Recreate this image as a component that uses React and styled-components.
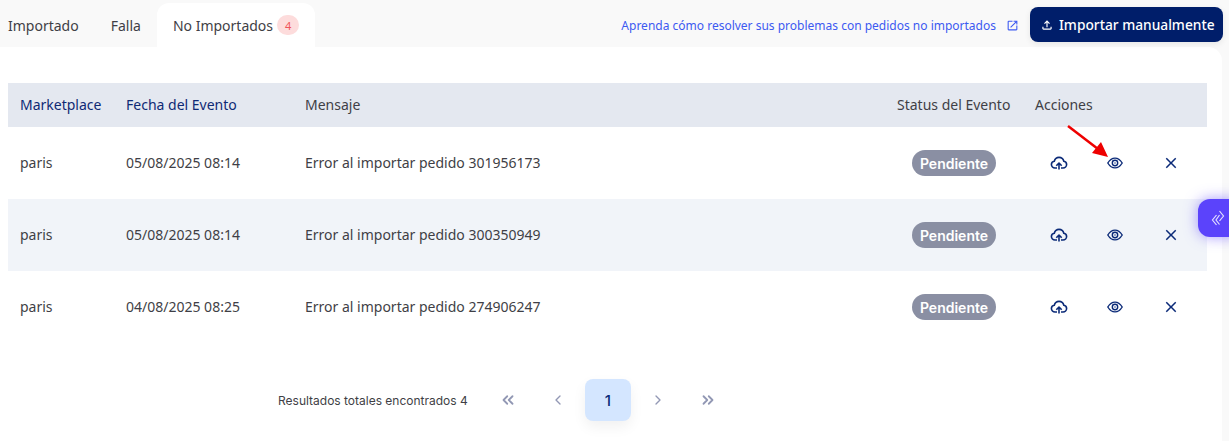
import React from 'react';
import styled, { createGlobalStyle } from 'styled-components';
import { MdClose, MdOpenInNew, MdOutlineFileUpload } from 'react-icons/md';
import { ChevronLeft, ChevronRight, ChevronsLeft, ChevronsRight } from 'lucide-react';

const rows = [
  { market: 'paris', date: '05/08/2025 08:14', order: '301956173' },
  { market: 'paris', date: '05/08/2025 08:14', order: '300350949' },
  { market: 'paris', date: '04/08/2025 08:25', order: '274906247' },
];

const GlobalStyle = createGlobalStyle`
  html, body { margin: 0; padding: 0; background: #f9f9f9; height: 441px; overflow: hidden; }
  body { font-family: "Noto Sans", "Open Sans", sans-serif; }
`;

const Page = styled.div`
  position: relative;
  width: 1229px;
  height: 441px;
  overflow: hidden;
`;

const TopBar = styled.div`
  display: flex;
  align-items: flex-start;
  justify-content: space-between;
  height: 47px;
  padding: 0 6px 0 8px;
  box-sizing: border-box;
`;

const Tabs = styled.div`
  display: flex;
  align-items: flex-start;
  padding-top: 3px;
`;

const Tab = styled.div`
  display: flex;
  align-items: center;
  height: 44px;
  box-sizing: border-box;
  padding: 0 16px;
  background: ${p => (p.$active ? '#fff' : 'transparent')};
  border-radius: 12px 12px 0 0;
  color: #3f3f46;
  font-size: 14px;
  &:first-child { padding-left: 0; }
`;

const Count = styled.span`
  display: inline-flex;
  align-items: center;
  justify-content: center;
  width: 22px;
  height: 20px;
  margin-left: 4px;
  border-radius: 10px;
  background: #fddcdc;
  color: #f0555a;
  font-size: 11px;
`;

const Help = styled.div`
  display: flex;
  align-items: center;
  height: 44px;
  margin-top: 3px;
`;

const HelpLink = styled.a`
  display: flex;
  align-items: center;
  gap: 10px;
  color: #3d5af1;
  font-size: 12px;
  svg { width: 13px; height: 13px; }
`;

const ImportButton = styled.button`
  display: flex;
  align-items: center;
  gap: 5px;
  width: 193px;
  height: 35px;
  margin: -1px 0 0 11px;
  padding: 0 0 0 10px;
  border: 0;
  border-radius: 8px;
  background: #001e6a;
  color: #fff;
  font-family: inherit;
  font-size: 13.75px;
  font-weight: 500;
  white-space: nowrap;
  box-shadow: 0 2px 6px rgba(0, 0, 0, 0.08);
  svg { width: 14px; height: 14px; }
`;

const Panel = styled.div`
  width: 1222px;
  height: 394px;
  padding: 36px 15px 0 8px;
  box-sizing: border-box;
  background: #fff;
  border-radius: 0 14px 0 0;
`;

const Row = styled.div`
  display: grid;
  grid-template-columns: 106px 179px 592px 138px 184px;
  align-items: center;
  height: ${p => (p.$head ? 44 : 72)}px;
  background: ${p => (p.$head ? '#e4e8f0' : p.$shaded ? '#f1f4f9' : '#fff')};
  color: #3f3f46;
  font-size: 14px;
`;

const Cell = styled.div`
  padding: 0 0 2px 12px;
  color: ${p => (p.$accent ? '#0f2a75' : 'inherit')};
  white-space: nowrap;
`;

const StatusCell = styled.div`
  display: flex;
  justify-content: center;
`;

const Pill = styled.span`
  display: inline-flex;
  align-items: center;
  height: 26px;
  padding: 0 8px;
  border-radius: 13px;
  background: #8a8fa3;
  color: #fff;
  font-family: Inter, sans-serif;
  font-size: 14px;
  font-weight: 600;
`;

const Actions = styled.div`
  display: flex;
  padding-left: 8px;
`;

const ActionIcon = styled.span`
  display: flex;
  justify-content: center;
  width: 56px;
  color: #0b2a78;
  svg { width: 18px; height: 18px; }
`;

const Pager = styled.div`
  display: flex;
  align-items: center;
  height: 42px;
  margin: 36px 0 0 270px;
`;

const Total = styled.span`
  margin-right: 15px;
  color: #3f3f46;
  font-family: Inter, sans-serif;
  font-size: 12px;
`;

const PageCell = styled.span`
  display: flex;
  align-items: center;
  justify-content: center;
  width: 46px;
  height: 42px;
  margin: 0 2px;
  border-radius: 8px;
  color: ${p => (p.$current ? '#0b2a78' : '#9298b4')};
  background: ${p => (p.$current ? '#d4e6ff' : 'transparent')};
  box-shadow: ${p => (p.$current ? '0 6px 14px rgba(0, 0, 0, 0.06)' : 'none')};
  font-family: Inter, sans-serif;
  font-size: 15px;
  font-weight: 500;
`;

const FloatTab = styled.div`
  position: absolute;
  left: 1198px;
  top: 199px;
  display: flex;
  align-items: center;
  justify-content: center;
  width: 40px;
  height: 38px;
  box-sizing: border-box;
  border-radius: 12px 0 0 12px;
  background: #5b43fb;
  box-shadow: 0 0 14px rgba(91, 67, 251, 0.55);
`;

const Annotation = styled.svg`
  position: absolute;
  left: 1060px;
  top: 120px;
`;

function Status() {
  return <StatusCell><Pill>Pendiente</Pill></StatusCell>;
}

function CloudIcon() {
  return (
    <svg viewBox="0 0 18 18" fill="none" stroke="currentColor" strokeWidth="1.6" strokeLinejoin="round">
      <path d="M7 14 H5 C2.9 14 1.4 12.4 1.4 10.6 C1.4 8.9 2.6 7.6 4.3 7.3 C4.9 5 6.8 3.4 9 3.4 C11.4 3.4 13.3 5.2 13.8 7.3 C15.4 7.6 16.6 8.9 16.6 10.6 C16.6 12.4 15.1 14 13 14 H11" />
      <path d="M9 15.6 V9.6" />
      <path d="M6.3 11.8 L9 9 L11.7 11.8" />
    </svg>
  );
}

function EyeIcon() {
  return (
    <svg viewBox="0 0 18 18" fill="none" stroke="currentColor" strokeWidth="1.4">
      <path d="M1.8 9 C4 5.4 6.4 4.1 9 4.1 C11.6 4.1 14 5.4 16.2 9 C14 12.6 11.6 13.9 9 13.9 C6.4 13.9 4 12.6 1.8 9 Z" />
      <circle cx="9" cy="9" r="2.7" />
      <circle cx="9" cy="9" r="0.7" fill="currentColor" stroke="none" />
    </svg>
  );
}

export default function App() {
  return (
    <Page>
      <GlobalStyle />
      <TopBar>
        <Tabs>
          <Tab>Importado</Tab>
          <Tab>Falla</Tab>
          <Tab $active>No Importados<Count>4</Count></Tab>
        </Tabs>
        <Help>
          <HelpLink>Aprenda cómo resolver sus problemas con pedidos no importados <MdOpenInNew /></HelpLink>
          <ImportButton><MdOutlineFileUpload />Importar manualmente</ImportButton>
        </Help>
      </TopBar>
      <Panel>
        <Row $head>
          <Cell $accent>Marketplace</Cell>
          <Cell $accent>Fecha del Evento</Cell>
          <Cell>Mensaje</Cell>
          <Cell>Status del Evento</Cell>
          <Cell>Acciones</Cell>
        </Row>
        {rows.map((r, i) => (
          <Row key={r.order} $shaded={i === 1}>
            <Cell>{r.market}</Cell>
            <Cell>{r.date}</Cell>
            <Cell>Error al importar pedido {r.order}</Cell>
            <Status />
            <Actions>
              <ActionIcon><CloudIcon /></ActionIcon>
              <ActionIcon><EyeIcon /></ActionIcon>
              <ActionIcon><MdClose /></ActionIcon>
            </Actions>
          </Row>
        ))}
        <Pager>
          <Total>Resultados totales encontrados 4</Total>
          <PageCell><ChevronsLeft size={18} strokeWidth={2.4} /></PageCell>
          <PageCell><ChevronLeft size={16} /></PageCell>
          <PageCell $current>1</PageCell>
          <PageCell><ChevronRight size={16} /></PageCell>
          <PageCell><ChevronsRight size={18} strokeWidth={2.4} /></PageCell>
        </Pager>
      </Panel>
      <Annotation width="56" height="42" viewBox="0 0 56 42">
        <path d="M8 6 L38 29" stroke="#ee0000" strokeWidth="2.5" />
        <path d="M48 37 L32 33 L41 22 Z" fill="#ee0000" />
      </Annotation>
      <FloatTab>
        <svg width="16" height="18" viewBox="0 0 16 18" fill="none" stroke="#e2deff" strokeWidth="1.2">
          <path d="M6.5 6 L2.5 11 L6.5 16" />
          <path d="M9.5 6 L6 11 L9.5 15.5" />
          <path d="M9.5 2 L13.5 7 L9.5 12" />
        </svg>
      </FloatTab>
    </Page>
  );
}
